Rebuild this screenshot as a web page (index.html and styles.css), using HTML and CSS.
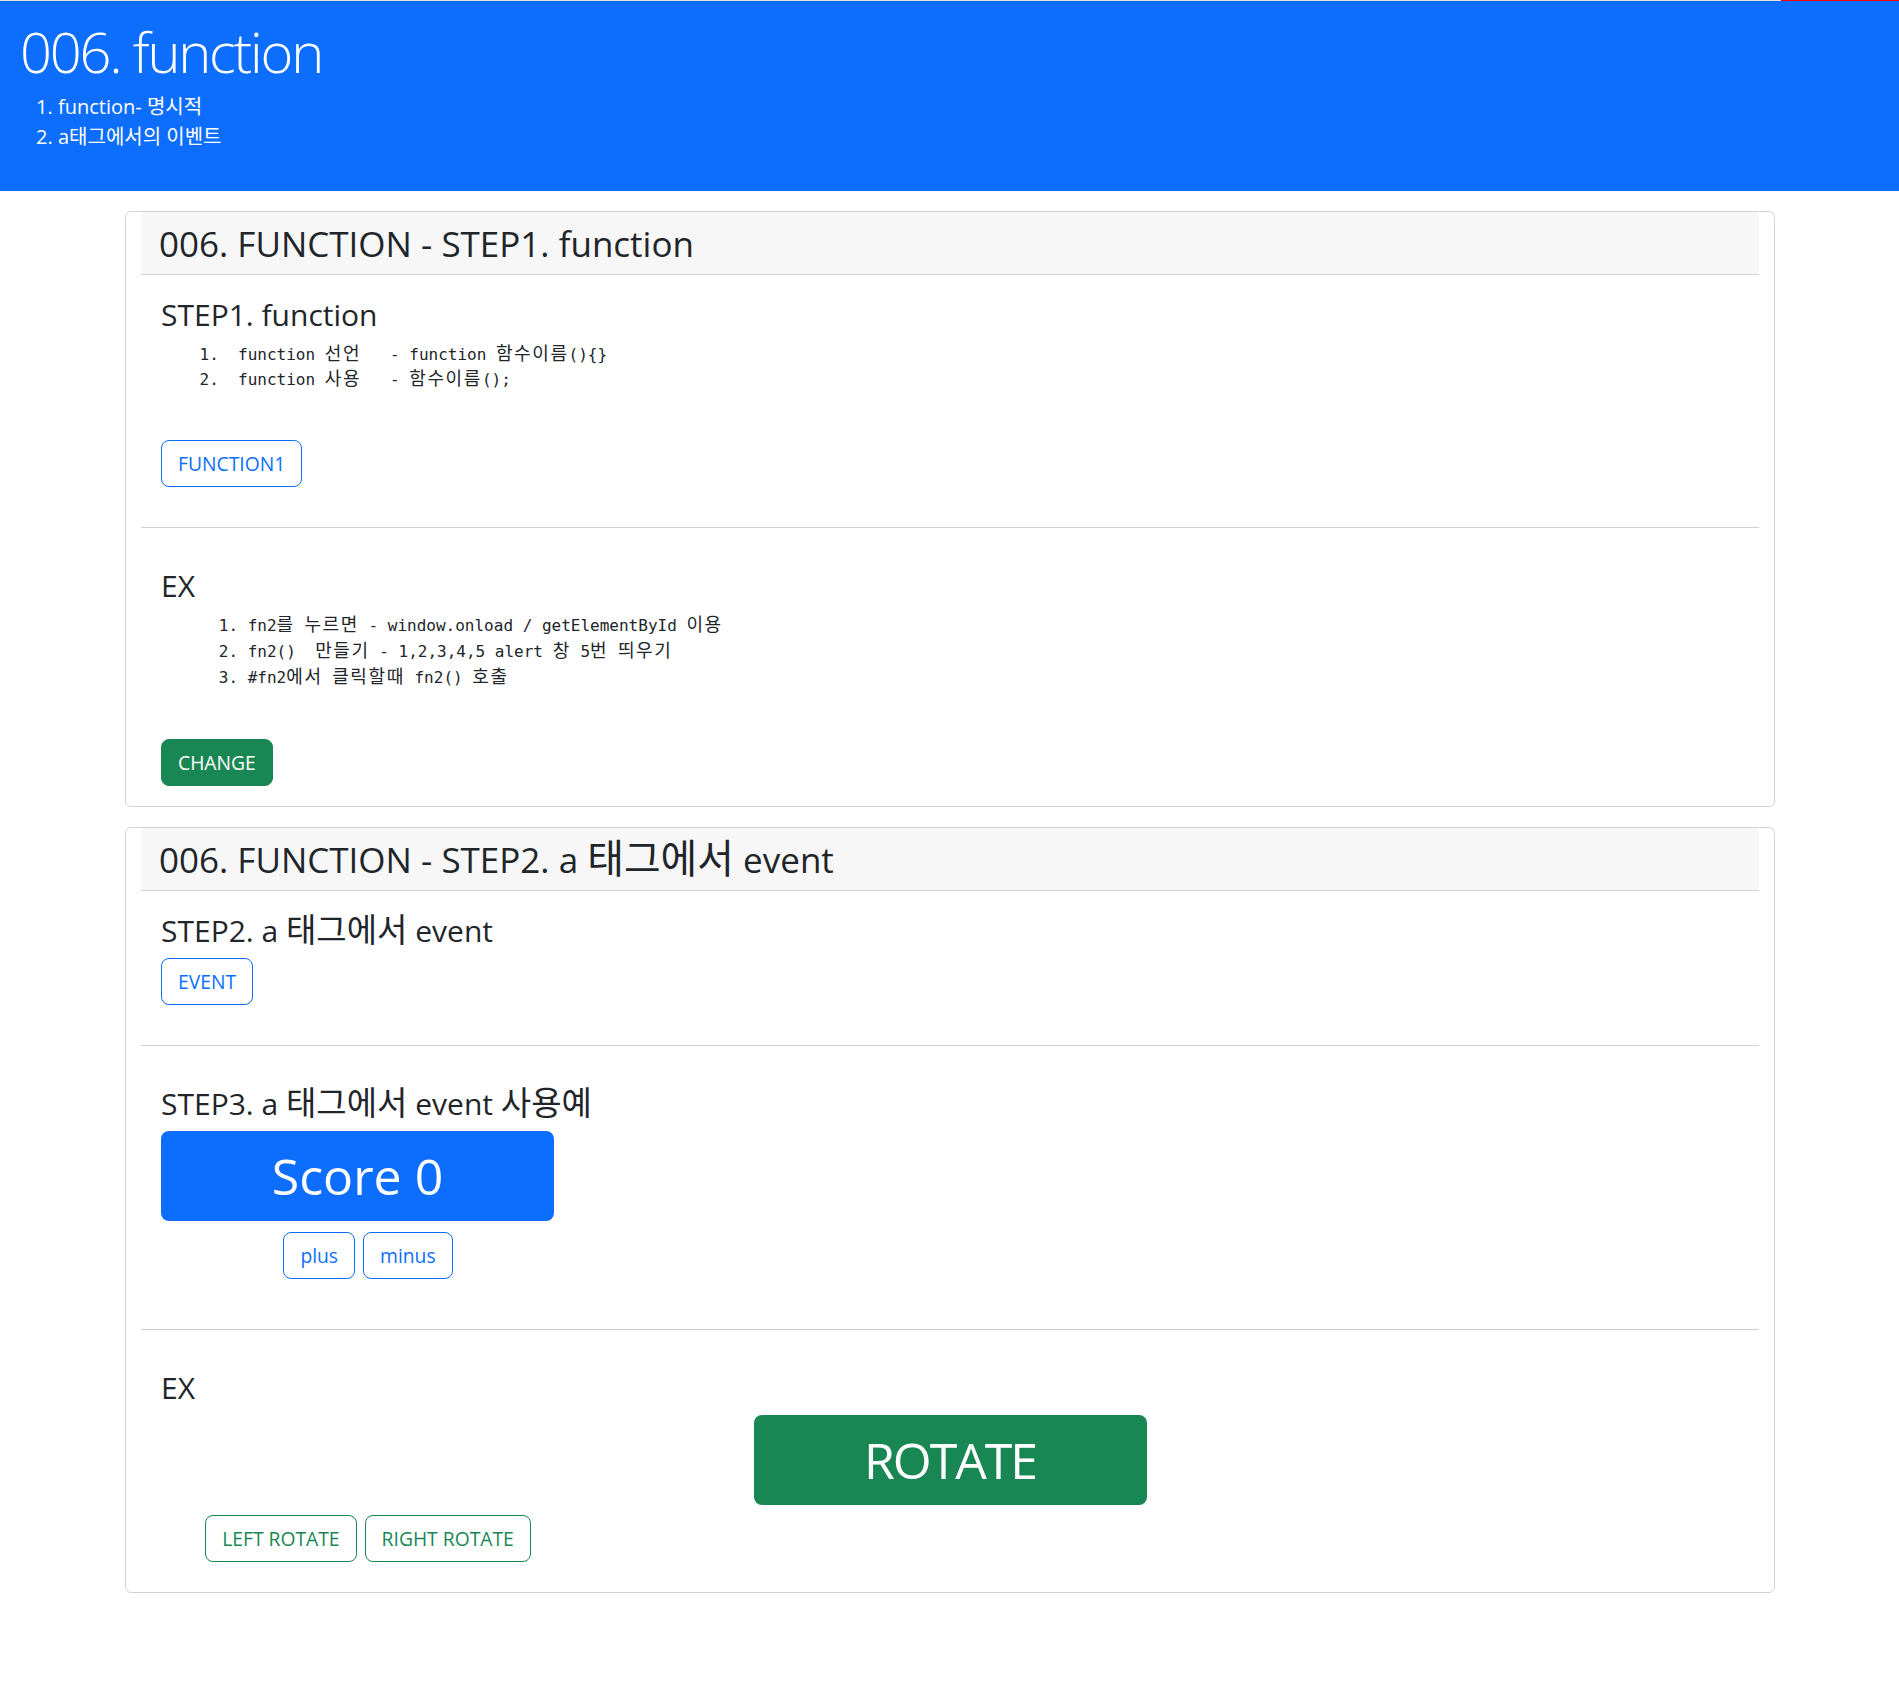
FILE: index.html
```html
<!DOCTYPE html>
<html lang="ko">
<head>
<meta charset="utf-8">
<title>006. function</title>
<link rel="stylesheet" href="styles.css">
</head>
<body>
<div class="topline"><span class="topline-red"></span></div>
<header class="hero">
  <h1 class="hero-title">006. function</h1>
  <ol class="hero-list">
    <li>function- 명시적</li>
    <li>a태그에서의 이벤트</li>
  </ol>
</header>
<main class="page">
  <section class="card">
    <h2 class="card-head">006. FUNCTION - STEP1. function</h2>
    <div class="sec">
      <h3 class="sec-title">STEP1. function</h3>
<pre class="code">    1.  function <span class="ko">선언</span>   - function <span class="ko">함수이름</span>(){}
    2.  function <span class="ko">사용</span>   - <span class="ko">함수이름</span>();</pre>
      <button class="btn btn-outline-primary">FUNCTION1</button>
    </div>
    <hr class="divider">
    <div class="sec">
      <h3 class="sec-title">EX</h3>
<pre class="code code-ex">      1. fn2<span class="ko">를</span> <span class="ko">누르면</span> - window.onload / getElementById <span class="ko">이용</span>
      2. fn2()  <span class="ko">만들기</span> - 1,2,3,4,5 alert <span class="ko">창</span> 5<span class="ko">번</span> <span class="ko">띄우기</span>
      3. #fn2<span class="ko">에서</span> <span class="ko">클릭할때</span> fn2() <span class="ko">호출</span></pre>
      <button class="btn btn-success">CHANGE</button>
    </div>
  </section>

  <section class="card">
    <h2 class="card-head">006. FUNCTION - STEP2. a <span class="hangul hangul-lg">태그에서</span> event</h2>
    <div class="sec">
      <h3 class="sec-title">STEP2. a <span class="hangul">태그에서</span> event</h3>
      <button class="btn btn-outline-primary">EVENT</button>
    </div>
    <hr class="divider">
    <div class="sec">
      <h3 class="sec-title">STEP3. a <span class="hangul">태그에서</span> event <span class="hangul">사용예</span></h3>
      <div class="score">Score 0</div>
      <div class="btn-group">
        <button class="btn btn-outline-primary">plus</button>
        <button class="btn btn-outline-primary">minus</button>
      </div>
    </div>
    <hr class="divider">
    <div class="sec">
      <h3 class="sec-title">EX</h3>
      <div class="rotate">ROTATE</div>
      <div class="btn-group">
        <button class="btn btn-outline-success">LEFT ROTATE</button>
        <button class="btn btn-outline-success">RIGHT ROTATE</button>
      </div>
    </div>
  </section>
</main>
</body>
</html>
```
FILE: styles.css
```css
* {
  box-sizing: border-box;
}

body {
  margin: 0;
  font-family: "Open Sans", "Noto Sans CJK KR", sans-serif;
  color: #212529;
  background: #fff;
}

.topline {
  display: flex;
  height: 1px;
  background: #e2e2e2;
}

.topline-red {
  margin-left: auto;
  width: 118px;
  background: #ff0000;
}

.hero {
  background: #0d6efd;
  color: #fff;
  padding: 17px 20px 39px;
}

.hero-title {
  font-size: 56px;
  font-weight: 300;
  line-height: 1.2;
  letter-spacing: -2.2px;
  margin: 0 0 7px;
}

.hero-list {
  margin: 0;
  padding-left: 38px;
  font-size: 20px;
  line-height: 30px;
}

.page {
  padding-bottom: 90px;
}

.card {
  width: 1650px;
  margin: 20px 0 0 125px;
  border: 1px solid #d3d3d3;
  border-radius: 6px;
  padding: 0 15px;
}

.card-head {
  margin: 0;
  height: 63px;
  padding: 11px 18px 0;
  background: #f7f7f7;
  border-bottom: 1px solid #d3d3d3;
  border-radius: 5px 5px 0 0;
  font-size: 35px;
  font-weight: 400;
  line-height: 42px;
}

.hangul {
  font-size: 1.1em;
  line-height: 0;
}

.hangul-lg {
  font-size: 1.14em;
}

.sec {
  padding: 22px 20px 20px;
}

.sec-title {
  margin: 0 0 9px;
  font-size: 30px;
  font-weight: 400;
  line-height: 36px;
}

.divider {
  margin: 20px 0 18px;
  border: 0;
  border-top: 1px solid #cfcfcf;
}

.code {
  margin: 0 0 48px;
  font-family: "DejaVu Sans Mono", "Noto Sans CJK KR", monospace;
  font-size: 16px;
  line-height: 25px;
  color: #212529;
}

.code-ex {
  line-height: 26px;
}

.ko {
  font-size: 18px;
  letter-spacing: 1.6px;
  line-height: 0;
}

.btn {
  display: inline-block;
  margin: 0;
  padding: 8px 16px;
  font-family: inherit;
  font-size: 19.3px;
  line-height: 29px;
  border: 1px solid transparent;
  border-radius: 8px;
  background: transparent;
  cursor: pointer;
}

.btn-outline-primary {
  color: #0d6efd;
  border-color: #0d6efd;
}

.btn-success {
  color: #fff;
  background: #198754;
  border-color: #198754;
}

.btn-outline-success {
  color: #198754;
  border-color: #198754;
}

.score,
.rotate {
  width: 393px;
  height: 90px;
  display: flex;
  align-items: center;
  justify-content: center;
  border-radius: 8px;
  color: #fff;
  font-size: 50px;
  font-weight: 400;
}

.score {
  background: #0d6efd;
  margin-bottom: 11px;
}

.rotate {
  background: #198754;
  margin: 0 auto 10px;
  letter-spacing: -2px;
}

.btn-group {
  width: 414px;
  display: flex;
  justify-content: center;
  gap: 8px;
  margin-bottom: 10px;
}
```
